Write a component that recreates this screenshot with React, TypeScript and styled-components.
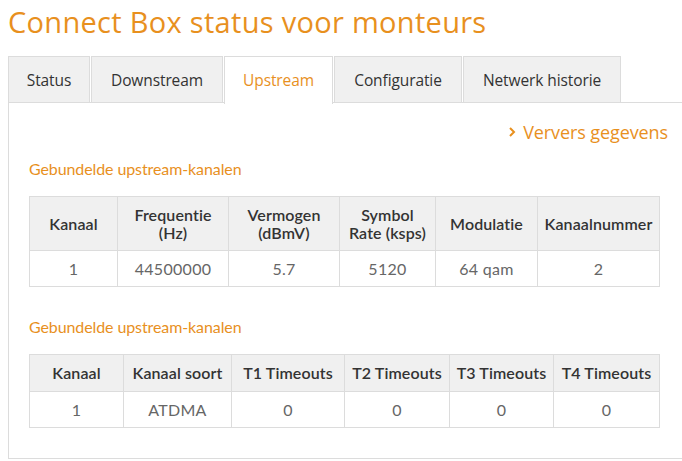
import React from "react";
import styled, { createGlobalStyle } from "styled-components";

const ORANGE = "#e8901e";
const BORDER = "#dcdcdc";

const Global = createGlobalStyle`
  html, body { margin: 0; padding: 0; background: #fff; overflow: hidden; }
  body { font-family: "Open Sans", "Liberation Sans", sans-serif; }
`;

const Page = styled.div`
  width: 690px;
  padding: 0 0 0 8px;
  box-sizing: border-box;
`;

const Title = styled.h1`
  margin: 0;
  padding-top: 2px;
  height: 54px;
  font-family: "Open Sans", sans-serif;
  font-weight: 400;
  font-size: 29px;
  line-height: 40px;
  color: ${ORANGE};
  letter-spacing: 0.3px;
  white-space: nowrap;
`;

const TabBar = styled.div`
  display: flex;
  align-items: flex-end;
  height: 47px;
  position: relative;
  z-index: 1;
`;

const Tab = styled.div<{ $active?: boolean; $w: number }>`
  box-sizing: border-box;
  width: ${(p) => p.$w}px;
  height: ${(p) => (p.$active ? 48 : 47)}px;
  margin-right: 1px;
  margin-bottom: ${(p) => (p.$active ? -1 : 0)}px;
  display: flex;
  align-items: center;
  justify-content: center;
  padding-bottom: ${(p) => (p.$active ? 1 : 0)}px;
  background: ${(p) => (p.$active ? "#fff" : "#f0f0f0")};
  border: 1px solid ${BORDER};
  border-bottom: ${(p) => (p.$active ? "none" : `1px solid ${BORDER}`)};
  font-family: "Open Sans", sans-serif;
  font-size: 15.5px;
  color: ${(p) => (p.$active ? ORANGE : "#333")};
  letter-spacing: -0.1px;
`;

const Panel = styled.div`
  box-sizing: border-box;
  width: 682px;
  height: 357px;
  border: 1px solid ${BORDER};
  margin-top: -1px;
  padding: 0 0 0 20px;
  display: flex;
  flex-direction: column;
`;

const RefreshRow = styled.div`
  display: flex;
  justify-content: flex-end;
  padding-right: 21px;
  height: 30px;
  margin-top: 14px;
  align-items: center;
`;

const RefreshLink = styled.a`
  font-family: "Open Sans", sans-serif;
  font-size: 18px;
  color: ${ORANGE};
  text-decoration: none;
  display: flex;
  align-items: center;
  gap: 7px;
  letter-spacing: -0.1px;
`;

const SectionTitle = styled.div<{ $mt: number }>`
  margin-top: ${(p) => p.$mt}px;
  height: 20px;
  line-height: 20px;
  font-family: Lato, sans-serif;
  font-size: 16px;
  color: ${ORANGE};
  letter-spacing: -0.1px;
`;

const Table = styled.table<{ $mt: number; $w: number }>`
  margin-top: ${(p) => p.$mt}px;
  width: ${(p) => p.$w}px;
  border-collapse: collapse;
  table-layout: fixed;
  font-family: Lato, sans-serif;
  font-size: 16px;
`;

const Th = styled.th<{ $h: number }>`
  height: ${(p) => p.$h}px;
  padding: 0;
  background: #f0f0f0;
  border: 1px solid ${BORDER};
  font-weight: 600;
  color: #333;
  line-height: 18px;
  text-align: center;
  letter-spacing: 0.1px;
  white-space: nowrap;
`;

const HeadLine = styled.span`
  display: block;
`;

const Td = styled.td`
  height: 35px;
  padding: 0;
  border: 1px solid ${BORDER};
  color: #666;
  text-align: center;
  letter-spacing: 0.3px;
`;

const Chevron = () => (
  <svg width="8" height="12" viewBox="0 0 8 12">
    <path d="M2 2 L6 6 L2 10" fill="none" stroke={ORANGE} strokeWidth="2" />
  </svg>
);

const tabs = [
  { label: "Status", w: 82 },
  { label: "Downstream", w: 132 },
  { label: "Upstream", w: 109, active: true },
  { label: "Configuratie", w: 128 },
  { label: "Netwerk historie", w: 158 },
];

const t1Widths = [88, 111, 111, 96, 102, 122];
const t1Heads = [
  ["Kanaal"],
  ["Frequentie", "(Hz)"],
  ["Vermogen", "(dBmV)"],
  ["Symbol", "Rate (ksps)"],
  ["Modulatie"],
  ["Kanaalnummer"],
];
const t1Row = ["1", "44500000", "5.7", "5120", "64 qam", "2"];

const t2Widths = [94, 108, 113, 105, 104, 106];
const t2Heads = ["Kanaal", "Kanaal soort", "T1 Timeouts", "T2 Timeouts", "T3 Timeouts", "T4 Timeouts"];
const t2Row = ["1", "ATDMA", "0", "0", "0", "0"];

const sum = (a: number[]) => a.reduce((s, v) => s + v, 0);

export default function App() {
  return (
    <Page>
      <Global />
      <Title>Connect Box status voor monteurs</Title>
      <TabBar>
        {tabs.map((t) => (
          <Tab key={t.label} $w={t.w} $active={t.active}>
            {t.label}
          </Tab>
        ))}
      </TabBar>
      <Panel>
        <RefreshRow>
          <RefreshLink href="#">
            <Chevron />
            Ververs gegevens
          </RefreshLink>
        </RefreshRow>
        <SectionTitle $mt={12}>Gebundelde upstream-kanalen</SectionTitle>
        <Table $mt={17} $w={sum(t1Widths)}>
          <colgroup>
            {t1Widths.map((w, i) => (
              <col key={i} style={{ width: w }} />
            ))}
          </colgroup>
          <thead>
            <tr>
              {t1Heads.map((h, i) => (
                <Th key={i} $h={53}>
                  {h.map((l, j) => (
                    <HeadLine key={j}>{l}</HeadLine>
                  ))}
                </Th>
              ))}
            </tr>
          </thead>
          <tbody>
            <tr>
              {t1Row.map((c, i) => (
                <Td key={i}>{c}</Td>
              ))}
            </tr>
          </tbody>
        </Table>
        <SectionTitle $mt={30}>Gebundelde upstream-kanalen</SectionTitle>
        <Table $mt={17} $w={sum(t2Widths)}>
          <colgroup>
            {t2Widths.map((w, i) => (
              <col key={i} style={{ width: w }} />
            ))}
          </colgroup>
          <thead>
            <tr>
              {t2Heads.map((h, i) => (
                <Th key={i} $h={36}>
                  {h}
                </Th>
              ))}
            </tr>
          </thead>
          <tbody>
            <tr>
              {t2Row.map((c, i) => (
                <Td key={i}>{c}</Td>
              ))}
            </tr>
          </tbody>
        </Table>
      </Panel>
    </Page>
  );
}
